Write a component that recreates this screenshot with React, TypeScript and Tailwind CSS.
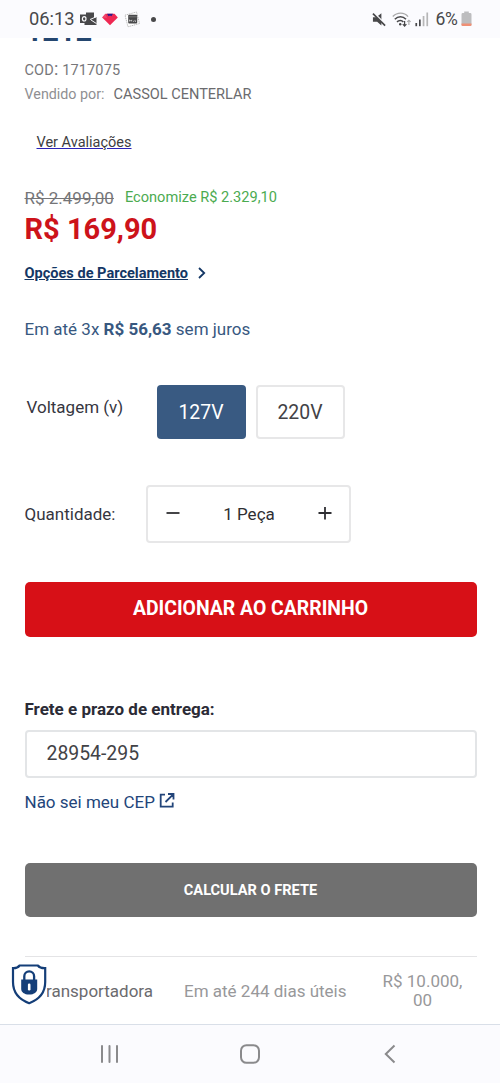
import React, { useState } from 'react';

const VOLTAGES = ['127V', '220V'];

const StatusBar: React.FC = () => (
  <header className="h-[38px] shrink-0 bg-[#fbfbfe] flex items-center justify-between pl-[29px] pr-[28.5px] text-[#48484a]">
    <div className="flex items-center">
      <span className="text-[18.3px] leading-5 w-[51px] whitespace-nowrap">06:13</span>
      {/* Outlook */}
      <svg width="17" height="14" viewBox="0 0 17 14">
        <path d="M6 0.5h8v5.5l2.5-1v8H4.5v-2H6z" fill="#48484a" />
        <path d="M10 7.5l6.5-2.8M11 8l5.5 3.6" stroke="#fbfbfe" strokeWidth="1" />
        <rect x="0" y="2.5" width="8.5" height="8.5" fill="#48484a" />
        <ellipse cx="4.2" cy="6.8" rx="1.8" ry="2.2" fill="none" stroke="#fbfbfe" strokeWidth="1.2" />
      </svg>
      <svg width="16" height="13" viewBox="0 0 16 13" className="ml-[5px]">
        <path d="M3.5 0.8h9L15.8 4.6 8 12.3 0.2 4.6z" fill="#ef2853" />
        <path d="M5 0.8h6L9.4 3.2 8 2.5 6.6 3.2z" fill="#2a1a8a" />
        <path d="M0.2 4.6L3.5 0.8 5 5z" fill="#f0476e" />
      </svg>
      <svg width="17" height="17" viewBox="0 0 17 17" className="ml-[6px]">
        <path d="M1 4.2L12.5 1l3 11.5L4 15.8z" fill="#fff" stroke="#9a9a9a" strokeWidth="0.7" strokeDasharray="1.2 0.7" />
        <rect x="4.2" y="3.8" width="9" height="8.6" rx="1" fill="#48484a" />
        <path d="M4.8 5.8h8" stroke="#8b8b8b" strokeWidth="0.7" />
        <path d="M5.5 10.5v-1.6l1.2 1 1-1v1.6M9 10.3h1M11 8.9v1.5h1" stroke="#fff" strokeWidth="0.6" fill="none" />
      </svg>
      <span className="ml-[10px] size-[5px] rounded-full bg-[#48484a]" />
    </div>
    <div className="flex items-center">
      <svg width="15" height="15" viewBox="0 0 16 15">
        <path d="M1 5h3.6L10 0.8v13L5.5 10H1z" fill="#48484a" />
        <path d="M1.6 0.2L15.2 13.8" stroke="#fbfbfe" strokeWidth="2.2" />
        <path d="M1 1.2L14 14" stroke="#48484a" strokeWidth="1.8" />
      </svg>
      <svg width="20" height="15" viewBox="0 0 20 15" className="ml-[5px]" fill="none">
        <path d="M0.8 4.6c4.4-4.6 11.4-4.6 15.2 0" stroke="#a9a9aa" strokeWidth="1.4" />
        <path d="M2.8 7.3c3.4-3.5 8-3.5 11.2 0" stroke="#48484a" strokeWidth="1.5" />
        <path d="M5 9.9c2-2 4.6-2 6.4 0" stroke="#48484a" strokeWidth="1.5" />
        <circle cx="8.2" cy="12.3" r="1.2" fill="#48484a" />
        <path d="M12.6 9v5M10.8 12.2l1.8 1.9 1.8-1.9" stroke="#48484a" strokeWidth="1.2" />
        <path d="M16.9 13V8.4M15.2 9.9l1.7-1.7 1.7 1.7" stroke="#a9a9aa" strokeWidth="1.1" />
      </svg>
      <svg width="14" height="15" viewBox="0 0 14 15" className="ml-[3px]">
        <rect x="0.4" y="11" width="1.7" height="3.2" fill="#48484a" />
        <rect x="4" y="7.5" width="1.7" height="6.7" fill="#48484a" />
        <rect x="7.7" y="4" width="1.7" height="10.2" fill="#b6b6b7" />
        <rect x="11.4" y="0.5" width="1.7" height="13.7" fill="#b6b6b7" />
      </svg>
      <span className="ml-[7px] w-[25px] text-[17.5px] leading-5 whitespace-nowrap tracking-[-0.4px]">6%</span>
      <svg width="11" height="16" viewBox="0 0 11 16">
        <path d="M3.2 0.5h4.6v1.6h1.4a1.3 1.3 0 0 1 1.3 1.3v10.3a1.3 1.3 0 0 1-1.3 1.3H1.8a1.3 1.3 0 0 1-1.3-1.3V3.4a1.3 1.3 0 0 1 1.3-1.3h1.4z" fill="#bdbdbf" />
        <path d="M0.5 12.6h10v1.1a1.3 1.3 0 0 1-1.3 1.3H1.8a1.3 1.3 0 0 1-1.3-1.3z" fill="#f08f75" />
      </svg>
    </div>
  </header>
);

const ShieldBadge: React.FC = () => (
  <svg width="36" height="41" viewBox="0 0 36 41" className="absolute left-[11px] top-[7px] bg-white">
    <path
      d="M2 4.2C5 4.4 7.2 3.3 8.6 1.5H26.8C28.2 3.3 30.4 4.4 34.2 4.2V18C34.2 28 28 35.5 18.2 39.2 8.2 35.5 2 28 2 18z"
      fill="#fff"
      stroke="#143e78"
      strokeWidth="2.2"
    />
    <path d="M13.3 16v-3.7a4.900 4.900 0 0 1 9.800 0V16" fill="none" stroke="#143e78" strokeWidth="2.3" />
    <path d="M10.2 15.5h16v9.5c0 3-3 5.600-8 5.600s-8-2.600-8-5.600z" fill="#143e78" />
    <rect x="16.9" y="19.5" width="2.6" height="7" rx="1.2" fill="#fff" />
  </svg>
);

const NavBar: React.FC = () => (
  <nav className="mt-auto h-[59px] shrink-0 bg-[#fbfbfe] border-t border-[#d9dfe8] flex items-center justify-between pl-[100px] pr-[104px]">
    <svg width="19" height="20" viewBox="0 0 19 20" stroke="#8a8a8c" strokeWidth="2" strokeLinecap="round">
      <path d="M2 2v16M9.5 2v16M17 2v16" />
    </svg>
    <svg width="22" height="20" viewBox="0 0 22 20" fill="none" stroke="#8a8a8c" strokeWidth="2" className="-ml-1">
      <rect x="2" y="1.2" width="18" height="17.6" rx="5.5" />
    </svg>
    <svg width="12" height="20" viewBox="0 0 12 20" fill="none" stroke="#8a8a8c" strokeWidth="2">
      <path d="M10.5 1.5L1.8 10l8.700 8.500" />
    </svg>
  </nav>
);

export default function App() {
  const [voltage, setVoltage] = useState('127V');
  const [quantity, setQuantity] = useState(1);
  const [cep, setCep] = useState('28954-295');

  return (
    <div className="h-[1083px] w-[500px] flex flex-col overflow-hidden bg-white font-[Roboto,sans-serif]">
      <StatusBar />

      <main className="flex flex-col pl-[24.5px] pr-[23.5px]">
        {/* Title, scrolled under the status bar */}
        <div className="h-5 overflow-hidden">
          <h1 className="-mt-[22px] ml-px text-[29px] leading-[30px] font-bold text-[#24466f]">1212</h1>
        </div>

        <p className="h-6 leading-[25px] text-[14.5px] tracking-[0.15px] text-[#77777a]">
          COD<span className="text-[18px] leading-none">:</span> 1717075
        </p>
        <p className="h-6 leading-[25px] text-[14.55px] text-[#6b6b6e]">
          <span className="mr-[9px] text-[14.3px] text-[#8f8f92]">Vendido por:</span>
          CASSOL CENTERLAR
        </p>

        <a href="#avaliacoes" className="mt-[27px] ml-3 self-start leading-5 text-[14.5px] text-[#3e3e42] underline decoration-[#2a22b8]">
          Ver Avaliações
        </a>

        <div className="mt-[35px] h-5 flex leading-5">
          <s className="text-[17px] text-[#757578]">R$ 2.499,00</s>
          <span className="ml-[11px] text-[14.6px] leading-[19px] text-[#4bab50]">Economize R$ 2.329,10</span>
        </div>
        <strong className="mt-[3px] h-9 leading-9 text-[29px] font-bold text-[#cd131a]">R$ 169,90</strong>

        <a href="#parcelamento" className="mt-[17px] h-5 flex items-center self-start leading-5 text-[14.55px] font-bold text-[#143765]">
          <span className="underline">Opções de Parcelamento</span>
          <svg width="8" height="12" viewBox="0 0 8 12" fill="none" stroke="#143765" strokeWidth="1.8" className="ml-[10px] -mt-[3px]">
            <path d="M1 1l5.200 5L1 11" />
          </svg>
        </a>

        <p className="mt-[33px] h-6 leading-6 text-[17px] text-[#38587f]">
          Em até 3x <b className="font-bold">R$ 56,63</b> sem juros
        </p>

        <div className="mt-11 h-[54px] flex">
          <span className="ml-[2px] mt-[10px] w-[130px] leading-6 text-[17px] text-[#36363f]">Voltagem (v)</span>
          <div className="flex gap-[10px]">
            {VOLTAGES.map((item) => (
              <button
                key={item}
                onClick={() => setVoltage(item)}
                className={`w-[89px] h-[54px] rounded-[4px] pt-px text-[19.4px] leading-[22px] ${
                  item === voltage ? 'bg-[#395a82] text-white' : 'border-2 border-[#e7e7e8] text-[#424246]'
                }`}
              >
                {item}
              </button>
            ))}
          </div>
        </div>

        <div className="mt-[46px] h-[58px] flex items-center">
          <span className="w-[121.5px] leading-6 text-[17px] text-[#36363f]">Quantidade:</span>
          <div className="w-[205px] h-[58px] flex items-center justify-between rounded-[4px] border-2 border-[#e7e7e8] pl-[18px] pr-[17px] text-[#2f2f33]">
            <button onClick={() => setQuantity(Math.max(1, quantity - 1))}>
              <svg width="14" height="14" viewBox="0 0 14 14" stroke="currentColor" strokeWidth="1.8">
                <path d="M0.5 6h13" />
              </svg>
            </button>
            <span className="text-[17px] leading-6">{quantity} Peça</span>
            <button onClick={() => setQuantity(quantity + 1)}>
              <svg width="14" height="14" viewBox="0 0 14 14" stroke="currentColor" strokeWidth="1.8">
                <path d="M0.5 6h13M7 0v12.5" />
              </svg>
            </button>
          </div>
        </div>

        <button className="mt-[39px] h-[55px] rounded-[5px] bg-[#d71017] pb-[2px] text-[19.4px] font-bold text-white">
          ADICIONAR AO CARRINHO
        </button>

        <label htmlFor="cep" className="mt-[62px] h-5 leading-5 text-[17px] font-bold text-[#2b2b36]">
          Frete e prazo de entrega:
        </label>
        <input
          id="cep"
          value={cep}
          onChange={(e) => setCep(e.target.value)}
          className="mt-[11px] h-12 rounded-[4px] border-2 border-[#e3e5e7] px-5 pb-px text-[19.4px] text-[#424246] outline-none"
        />
        <a href="#cep" className="mt-[14px] h-5 flex self-start leading-5 text-[17px] text-[#23457a]">
          Não sei meu CEP
          <svg width="16" height="16" viewBox="0 0 16 16" fill="none" stroke="#23457a" strokeWidth="1.8" className="ml-1">
            <path d="M6 2.700H1.700v12h12V10.500M9 2h5.500V7.500M14.200 2.300L6.500 10" />
          </svg>
        </a>

        <button className="mt-[51px] h-[54px] rounded-[5px] bg-[#707070] pt-px text-[14.6px] font-bold text-white">
          CALCULAR O FRETE
        </button>

        <div className="mt-[39px] border-t border-[#e4e4e6]" />
      </main>

      <section className="relative h-[67px] flex items-center text-[17px] leading-[19px] text-[#98989a]">
        <span className="ml-[36.5px] mt-[2px] w-[147.5px] text-[#6b6b6e]">Transportadora</span>
        <span className="mt-[2px] w-[190px]">Em até 244 dias úteis</span>
        <span className="w-[97px] mt-px text-center">
          R$ 10.000,
          <br />
          00
        </span>
        <ShieldBadge />
      </section>

      <NavBar />
    </div>
  );
}
